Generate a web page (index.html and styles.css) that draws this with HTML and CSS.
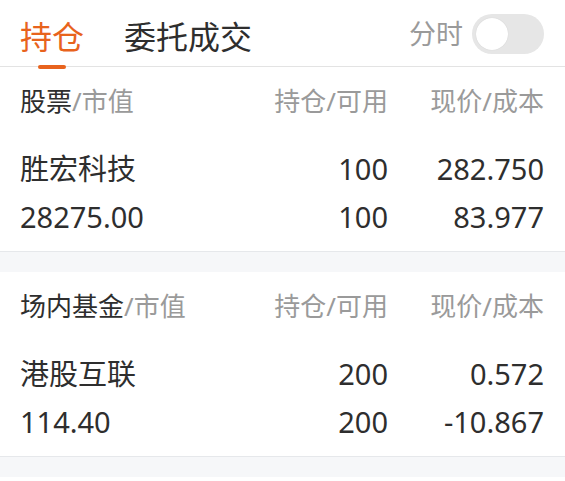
FILE: index.html
```html
<!DOCTYPE html>
<html lang="zh-CN">
<head>
<meta charset="utf-8">
<title>持仓</title>
<link rel="stylesheet" href="styles.css">
</head>
<body>
<div class="tabbar">
  <div class="tabs">
    <div class="tab active">持仓<span class="ind"></span></div>
    <div class="tab">委托成交</div>
  </div>
  <div class="fenshi">
    <span class="fs-label">分时</span>
    <span class="toggle"><span class="knob"></span></span>
  </div>
</div>

<div class="section">
  <div class="grid head">
    <div class="c1"><span class="dark">股票</span>/市值</div>
    <div class="c2">持仓/可用</div>
    <div class="c3">现价/成本</div>
  </div>
  <div class="grid row first">
    <div class="c1">胜宏科技</div>
    <div class="c2">100</div>
    <div class="c3">282.750</div>
  </div>
  <div class="grid row">
    <div class="c1">28275.00</div>
    <div class="c2">100</div>
    <div class="c3">83.977</div>
  </div>
</div>

<div class="section">
  <div class="grid head">
    <div class="c1"><span class="dark">场内基金</span>/市值</div>
    <div class="c2">持仓/可用</div>
    <div class="c3">现价/成本</div>
  </div>
  <div class="grid row first">
    <div class="c1">港股互联</div>
    <div class="c2">200</div>
    <div class="c3">0.572</div>
  </div>
  <div class="grid row">
    <div class="c1">114.40</div>
    <div class="c2">200</div>
    <div class="c3">-10.867</div>
  </div>
</div>

<div class="tail"></div>
</body>
</html>
```

FILE: styles.css
```css
* { box-sizing: border-box; }
html, body { margin: 0; padding: 0; }
body {
  background: #f6f7f9;
  font-family: "Noto Sans", "Noto Sans CJK SC", sans-serif;
  color: #2e2e2e;
  width: 565px;
  height: 481px;
  overflow: hidden;
}
.tabbar {
  background: #fff;
  height: 67px;
  border-bottom: 1px solid #e3e3e3;
  display: flex;
  align-items: center;
  justify-content: space-between;
  padding: 0 21px 0 20px;
}
.tabs {
  display: flex;
  gap: 40px;
  height: 100%;
  align-items: center;
}
.tab {
  position: relative;
  font-size: 32px;
  line-height: 40px;
  color: #2e2e2e;
  margin-top: 8px;
}
.tab.active { color: #e8631d; }
.ind {
  position: absolute;
  left: 50%;
  margin-left: -14px;
  top: 48px;
  width: 28px;
  height: 4px;
  border-radius: 2px;
  background: #e8631d;
}
.fenshi {
  display: flex;
  align-items: center;
  gap: 9px;
}
.fs-label {
  font-size: 27px;
  color: #9a9a9a;
  line-height: 40px;
  margin-top: 1px;
}
.toggle {
  display: block;
  width: 72px;
  height: 40px;
  border-radius: 20px;
  background: #e6e6e6;
  padding: 4px;
  margin-top: 1px;
}
.knob {
  display: block;
  width: 32px;
  height: 32px;
  border-radius: 50%;
  background: #fff;
  box-shadow: 0 0 1px rgba(0,0,0,0.15);
}
.section {
  background: #fff;
  border-bottom: 1px solid #e6e8eb;
  margin-bottom: 20px;
  padding: 10px 21px 11px 20px;
  height: 185px;
}
.tail { background: #fff; height: 4px; }
.grid {
  display: grid;
  grid-template-columns: 1fr 130px 156px;
}
.c2, .c3 { text-align: right; }
.head {
  font-size: 26px;
  line-height: 48px;
  color: #9a9a9a;
}
.head .dark { color: #2e2e2e; }
.row {
  font-size: 29px;
  line-height: 48px;
  color: #2e2e2e;
}
.row.first { margin-top: 20px; }
```
